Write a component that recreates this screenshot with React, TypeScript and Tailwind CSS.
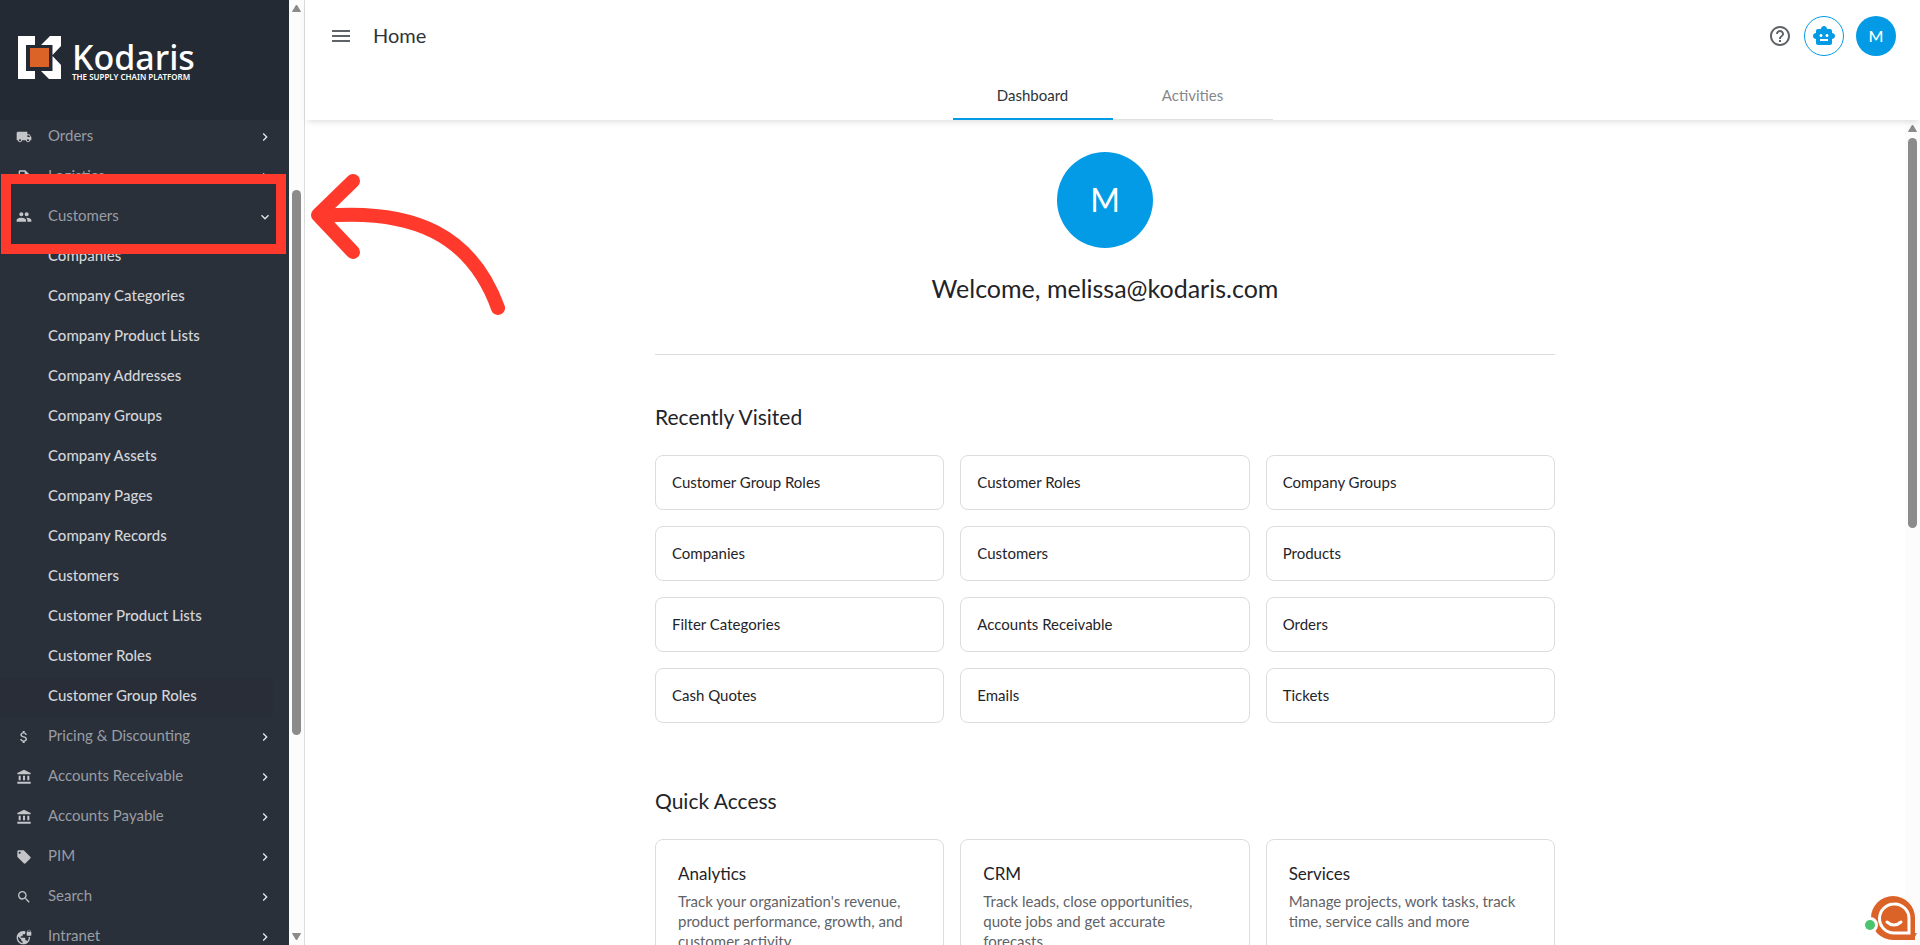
import type { IconType } from "react-icons";
import {
    MdAccountBalance,
    MdAttachMoney,
    MdChevronRight,
    MdExpandMore,
    MdHelpOutline,
    MdLocalOffer,
    MdLocalShipping,
    MdMenu,
    MdOutlineInsertDriveFile,
    MdPeople,
    MdSearch,
    MdSmartToy,
    MdVpnLock,
} from "react-icons/md";

interface MenuItem {
    label: string;
    icon: IconType;
    children?: string[];
}

const menu: MenuItem[] = [
    { label: "Orders", icon: MdLocalShipping },
    { label: "Logistics", icon: MdOutlineInsertDriveFile },
    {
        label: "Customers",
        icon: MdPeople,
        children: [
            "Companies",
            "Company Categories",
            "Company Product Lists",
            "Company Addresses",
            "Company Groups",
            "Company Assets",
            "Company Pages",
            "Company Records",
            "Customers",
            "Customer Product Lists",
            "Customer Roles",
            "Customer Group Roles",
        ],
    },
    { label: "Pricing & Discounting", icon: MdAttachMoney },
    { label: "Accounts Receivable", icon: MdAccountBalance },
    { label: "Accounts Payable", icon: MdAccountBalance },
    { label: "PIM", icon: MdLocalOffer },
    { label: "Search", icon: MdSearch },
    { label: "Intranet", icon: MdVpnLock },
];

const activeChild = "Customer Group Roles";

const recent = [
    "Customer Group Roles",
    "Customer Roles",
    "Company Groups",
    "Companies",
    "Customers",
    "Products",
    "Filter Categories",
    "Accounts Receivable",
    "Orders",
    "Cash Quotes",
    "Emails",
    "Tickets",
];

const quickAccess = [
    {
        title: "Analytics",
        text: "Track your organization's revenue, product performance, growth, and customer activity",
    },
    {
        title: "CRM",
        text: "Track leads, close opportunities, quote jobs and get accurate forecasts",
    },
    {
        title: "Services",
        text: "Manage projects, work tasks, track time, service calls and more",
    },
];

function Logo() {
    return (
        <a href="#" className="flex items-end gap-[11px] text-white">
            <svg className="mb-0.5" width="43" height="43" viewBox="0 0 43 43">
                <path d="M0 0H17V9H8V35H17V43H0Z" fill="#fff" />
                <path d="M23 9L32 0H43V10L34.500 19V9Z" fill="#fff" />
                <path d="M23 35H34.500V20L43 29V43H31Z" fill="#fff" />
                <rect x="12" y="12" width="19" height="19" fill="#dc6328" />
            </svg>
            <span className="flex flex-col font-['Noto_Sans',sans-serif]">
                <span className="text-[34px] leading-8 font-medium">Kodaris</span>
                <span className="text-[8px] leading-2 font-semibold">THE SUPPLY CHAIN PLATFORM</span>
            </span>
        </a>
    );
}

function Scrollbar({ thumb }: { thumb: string }) {
    return (
        <div className="flex w-[15px] shrink-0 flex-col items-center justify-between bg-[#fcfcfc] py-1" aria-hidden="true">
            <svg width="9" height="8" viewBox="0 0 9 8">
                <path d="M4.5 1L8.5 7.5H.5Z" fill="#8b8b8b" stroke="#8b8b8b" strokeLinejoin="round" />
            </svg>
            <div className="flex min-h-0 w-[9px] flex-1 flex-col py-1">
                <div className={thumb} />
            </div>
            <svg width="9" height="8" viewBox="0 0 9 8">
                <path d="M4.5 7L8.5 .5H.5Z" fill="#8b8b8b" stroke="#8b8b8b" strokeLinejoin="round" />
            </svg>
        </div>
    );
}

function Sidebar() {
    return (
        <aside className="flex w-[305px] shrink-0 border-r border-[#dcdcdc]">
            <div className="flex min-w-0 flex-1 flex-col bg-[#2a303a]">
                <div className="flex h-[120px] shrink-0 items-center bg-[#242a33] px-[18px] pb-1">
                    <Logo />
                </div>
                <nav className="min-h-0 flex-1 overflow-hidden">
                    <ul className="-mt-[3px] pr-4 text-[15px]">
                        {menu.map((item) => (
                            <li key={item.label}>
                                <button type="button" className="flex h-10 w-full items-center pl-4 text-left text-[#999da3]">
                                    <item.icon className="mr-4 size-4 text-[#c3c5c9]" />
                                    <span className="flex-1 pb-[3px]">{item.label}</span>
                                    {item.children ? (
                                        <MdExpandMore className="size-4 text-[#e4e5e7]" />
                                    ) : (
                                        <MdChevronRight className="size-4 text-[#e4e5e7]" />
                                    )}
                                </button>
                                {item.children && (
                                    <ul>
                                        {item.children.map((child) => (
                                            <li key={child} className={child === activeChild ? "bg-[#282d37]" : ""}>
                                                <a
                                                    href="#"
                                                    className="flex h-10 items-center pb-[3px] pl-12 font-medium text-[#d3d5d8]"
                                                >
                                                    {child}
                                                </a>
                                            </li>
                                        ))}
                                    </ul>
                                )}
                            </li>
                        ))}
                    </ul>
                </nav>
            </div>
            <Scrollbar thumb="mt-[174px] h-[545px] rounded-full bg-[#8b8b8b]" />
        </aside>
    );
}

function Header() {
    return (
        <header className="relative z-10 flex h-[120px] shrink-0 flex-col justify-between bg-white shadow-[0_4px_6px_-2px_rgba(0,0,0,0.12)]">
            <div className="flex h-[72px] items-center px-6">
                <button type="button" aria-label="Menu" className="text-[#5f6368]">
                    <MdMenu className="size-6" />
                </button>
                <h1 className="ml-5 flex-1 pb-0.5 text-xl text-[#2e3338]">Home</h1>
                <button type="button" aria-label="Help" className="mr-3 text-[#5f6368]">
                    <MdHelpOutline className="size-6" />
                </button>
                <button
                    type="button"
                    aria-label="Assistant"
                    className="mr-3 flex size-10 items-center justify-center rounded-full border border-[#039be5] text-[#039be5]"
                >
                    <MdSmartToy className="size-6" />
                </button>
                <button type="button" className="size-10 rounded-full bg-[#039be5] text-base font-medium text-white">
                    M
                </button>
            </div>
            <div className="flex justify-center text-[15px]">
                <button type="button" className="h-12 w-40 border-b-2 border-[#039be5] text-[#2e3338]">
                    Dashboard
                </button>
                <button type="button" className="h-12 w-40 border-b border-[#e0e0e0] pb-px text-[#85888c]">
                    Activities
                </button>
            </div>
        </header>
    );
}

function Dashboard() {
    return (
        <main className="min-w-0 flex-1 overflow-hidden">
            <div className="mx-auto w-full max-w-[900px] pt-8">
                <div className="mx-auto flex size-24 items-center justify-center rounded-full bg-[#039be5] text-[32px] text-white">
                    M
                </div>
                <h2 className="mt-6 text-center text-[25px] leading-8 text-[#1f2429]">Welcome, melissa@kodaris.com</h2>
                <hr className="mt-[50px] border-[#dcdcdc]" />

                <h3 className="mt-12 text-[21px] leading-7 text-[#1f2429]">Recently Visited</h3>
                <div className="mt-6 grid grid-cols-3 gap-4">
                    {recent.map((name) => (
                        <a
                            key={name}
                            href="#"
                            className="flex h-[55px] items-center rounded-lg border border-[#dcdcdc] px-4 text-[15px] text-[#1f2429]"
                        >
                            {name}
                        </a>
                    ))}
                </div>

                <h3 className="mt-16 text-[21px] leading-7 text-[#1f2429]">Quick Access</h3>
                <div className="mt-6 grid grid-cols-3 gap-4">
                    {quickAccess.map((card) => (
                        <a key={card.title} href="#" className="rounded-lg border border-[#dcdcdc] px-[22px] py-[22px]">
                            <h4 className="text-[17px] leading-6 text-[#1f2429]">{card.title}</h4>
                            <p className="mt-[5px] text-[15px] leading-5 text-[#5f6368]">{card.text}</p>
                        </a>
                    ))}
                </div>
            </div>
        </main>
    );
}

function Callout() {
    return (
        <div className="pointer-events-none absolute inset-0 z-20" aria-hidden="true">
            <div className="absolute top-[174px] left-px h-20 w-[285px] border-10 border-[#ff392b]" />
            <svg
                className="absolute top-[165px] left-[300px]"
                width="220"
                height="160"
                viewBox="300 165 220 160"
                fill="none"
                stroke="#ff392b"
                strokeWidth="14"
                strokeLinecap="round"
                strokeLinejoin="round"
            >
                <path d="M353 181L318 215L353 252" />
                <path d="M322 216C415 208 472 236 498 308" />
            </svg>
        </div>
    );
}

function ChatButton() {
    return (
        <button type="button" aria-label="Chat" className="absolute right-0.5 bottom-[3px] z-20">
            <svg width="54" height="48" viewBox="0 0 54 48" fill="none">
                <path d="M29 2A22 22 0 0 1 51 24V46H29A22 22 0 0 1 29 2Z" fill="#dc6328" />
                <path d="M30 10A14.500 14.500 0 0 1 45 25V39H30A14.500 14.500 0 0 1 30 10Z" stroke="#fff" strokeWidth="3" />
                <path d="M23 28Q30 34 37 28" stroke="#fff" strokeWidth="3" strokeLinecap="round" />
                <circle cx="6" cy="31" r="8" fill="#fff" />
                <circle cx="6" cy="31" r="5" fill="#4bc46d" />
            </svg>
        </button>
    );
}

export default function App() {
    return (
        <div className="relative flex h-screen overflow-hidden bg-white font-['Lato',sans-serif]">
            <Sidebar />
            <div className="flex min-w-0 flex-1 flex-col">
                <Header />
                <div className="flex min-h-0 flex-1">
                    <Dashboard />
                    <Scrollbar thumb="mt-[2px] h-[390px] rounded-full bg-[#8b8b8b]" />
                </div>
            </div>
            <Callout />
            <ChatButton />
        </div>
    );
}
